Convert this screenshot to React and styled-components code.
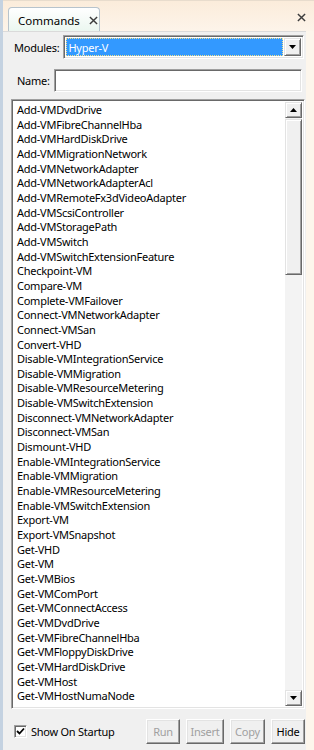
import React from "react";
import styled, { createGlobalStyle } from "styled-components";

const GlobalStyle = createGlobalStyle`
  body {
    margin: 0;
    font-family: "Noto Sans", "DejaVu Sans", sans-serif;
    font-size: 11px;
    letter-spacing: -0.25px;
    color: #000;
  }
`;

const commands = [
  "Add-VMDvdDrive",
  "Add-VMFibreChannelHba",
  "Add-VMHardDiskDrive",
  "Add-VMMigrationNetwork",
  "Add-VMNetworkAdapter",
  "Add-VMNetworkAdapterAcl",
  "Add-VMRemoteFx3dVideoAdapter",
  "Add-VMScsiController",
  "Add-VMStoragePath",
  "Add-VMSwitch",
  "Add-VMSwitchExtensionFeature",
  "Checkpoint-VM",
  "Compare-VM",
  "Complete-VMFailover",
  "Connect-VMNetworkAdapter",
  "Connect-VMSan",
  "Convert-VHD",
  "Disable-VMIntegrationService",
  "Disable-VMMigration",
  "Disable-VMResourceMetering",
  "Disable-VMSwitchExtension",
  "Disconnect-VMNetworkAdapter",
  "Disconnect-VMSan",
  "Dismount-VHD",
  "Enable-VMIntegrationService",
  "Enable-VMMigration",
  "Enable-VMResourceMetering",
  "Enable-VMSwitchExtension",
  "Export-VM",
  "Export-VMSnapshot",
  "Get-VHD",
  "Get-VM",
  "Get-VMBios",
  "Get-VMComPort",
  "Get-VMConnectAccess",
  "Get-VMDvdDrive",
  "Get-VMFibreChannelHba",
  "Get-VMFloppyDiskDrive",
  "Get-VMHardDiskDrive",
  "Get-VMHost",
  "Get-VMHostNumaNode",
  "Get-VMHostNumaNodeStatus",
];

//little glyphs
const CloseIcon = ({ size = 10 }) => (
  <svg width={size} height={size} viewBox="0 0 10 10">
    <path d="M1 1 L9 9 M9 1 L1 9" stroke="#3c3c3c" strokeWidth="1.6" />
  </svg>
);

const Arrow = ({ up }) => (
  <svg width="7" height="4" viewBox="0 0 7 4">
    <path d={up ? "M0 4 L7 4 L3.5 0 Z" : "M0 0 L7 0 L3.5 4 Z"} fill="#000" />
  </svg>
);

const App = () => {
  return (
    <>
      <GlobalStyle />
      <Window>
        <Header>
          <Tab>
            Commands
            <TabClose>
              <CloseIcon size={9} />
            </TabClose>
          </Tab>
          <PaneClose>
            <CloseIcon size={9} />
          </PaneClose>
        </Header>
        <Body>
          <Panel>
            <FieldRow $top={3} $left={11}>
              <Label>Modules:</Label>
              <Combo>
                <Selected>
                  <SelectedText>Hyper-V</SelectedText>
                </Selected>
                <RaisedButton $w={17}>
                  <Arrow />
                </RaisedButton>
              </Combo>
            </FieldRow>
            <FieldRow $top={10} $left={14}>
              <Label>Name:</Label>
              <TextInput />
            </FieldRow>
            <ListBox>
              <Items>
                {commands.map((c) => (
                  <Item key={c}>{c}</Item>
                ))}
              </Items>
              <Scrollbar>
                <RaisedButton $w={17} $h={16}>
                  <Arrow up />
                </RaisedButton>
                <Track>
                  <Thumb />
                </Track>
                <RaisedButton $w={17} $h={16}>
                  <Arrow />
                </RaisedButton>
              </Scrollbar>
            </ListBox>
            <Footer>
              <CheckLabel>
                <CheckBox>
                  <svg width="9" height="9" viewBox="0 0 9 9">
                    <path
                      d="M1 4 L3.5 6.5 L8 1.5"
                      stroke="#000"
                      strokeWidth="1.8"
                      fill="none"
                    />
                  </svg>
                </CheckBox>
                Show On Startup
              </CheckLabel>
              <Buttons>
                <PushButton $w={34} disabled>
                  Run
                </PushButton>
                <PushButton $w={38} disabled>
                  Insert
                </PushButton>
                <PushButton $w={35} disabled>
                  Copy
                </PushButton>
                <PushButton $w={34}>Hide</PushButton>
              </Buttons>
            </Footer>
          </Panel>
        </Body>
      </Window>
    </>
  );
};

export default App;

const Window = styled.div`
  width: 314px;
  height: 750px;
  display: flex;
  flex-direction: column;
  background: #fdf6ec;
  box-sizing: border-box;
  border-left: 3px solid #c4d2e1;
  overflow: hidden;
`;

const Header = styled.div`
  height: 31px;
  flex-shrink: 0;
  display: flex;
  align-items: flex-end;
  justify-content: space-between;
  padding-left: 5px;
  padding-right: 8px;
  background: linear-gradient(#fbecdb, #fdf4ea);
  border-top: 1px solid #e8dccd;
  box-sizing: border-box;
`;

const Tab = styled.div`
  height: 25px;
  width: 92px;
  box-sizing: border-box;
  display: flex;
  align-items: center;
  padding-left: 9px;
  gap: 9px;
  font-size: 11.5px;
  letter-spacing: 0;
  border: 1px solid #b7c3cc;
  border-bottom: none;
  border-radius: 4px 4px 0 0;
  background: linear-gradient(#ffffff, #eaf6ef);
  margin-bottom: -1px;
`;

const TabClose = styled.span`
  display: flex;
  margin-top: 1px;
`;

const PaneClose = styled.span`
  display: flex;
  align-self: center;
  margin-top: 2px;
`;

const Body = styled.div`
  flex: 1;
  display: flex;
  padding-right: 8px;
  min-height: 0;
`;

const Panel = styled.div`
  flex: 1;
  background: #f0f0f0;
  display: flex;
  flex-direction: column;
  border-top: 1px solid #dadada;
  min-height: 0;
`;

const FieldRow = styled.div`
  display: flex;
  align-items: center;
  gap: 4px;
  margin-top: ${(p) => p.$top}px;
  padding-left: ${(p) => p.$left}px;
  padding-right: 2px;
`;

const Label = styled.span`
  white-space: nowrap;
`;

const sunken = `
  border-style: solid;
  border-width: 1px;
  border-color: #a0a0a0 #ffffff #ffffff #a0a0a0;
  box-shadow: inset 1px 1px 0 #696969, inset -1px -1px 0 #e3e3e3;
`;

const Combo = styled.div`
  flex: 1;
  height: 24px;
  box-sizing: border-box;
  ${sunken}
  background: #fff;
  display: flex;
  align-items: stretch;
  padding: 2px;
  gap: 1px;
`;

const Selected = styled.div`
  flex: 1;
  background: #3399ff;
  outline: 1px dotted #f2e08a;
  outline-offset: -1px;
  display: flex;
  align-items: center;
  padding-left: 2px;
`;

const SelectedText = styled.span`
  color: #fff;
`;

const RaisedButton = styled.div`
  width: ${(p) => p.$w}px;
  height: ${(p) => (p.$h ? `${p.$h}px` : "auto")};
  flex-shrink: 0;
  box-sizing: border-box;
  background: #f0f0f0;
  border-style: solid;
  border-width: 1px;
  border-color: #e3e3e3 #696969 #696969 #e3e3e3;
  box-shadow: inset 1px 1px 0 #ffffff, inset -1px -1px 0 #a0a0a0;
  display: flex;
  align-items: center;
  justify-content: center;
`;

const TextInput = styled.div`
  flex: 1;
  height: 23px;
  box-sizing: border-box;
  ${sunken}
  background: #fff;
  margin-right: 2px;
`;

const ListBox = styled.div`
  margin: 7px 1px 0 8px;
  height: 610px;
  flex-shrink: 0;
  box-sizing: border-box;
  ${sunken}
  background: #fff;
  display: flex;
  padding: 2px;
`;

const Items = styled.div`
  flex: 1;
  overflow: hidden;
  padding-left: 3px;
  padding-top: 1px;
`;

const Item = styled.div`
  line-height: 14.66px;
  white-space: nowrap;
`;

const Scrollbar = styled.div`
  width: 17px;
  display: flex;
  flex-direction: column;
`;

const Track = styled.div`
  flex: 1;
  background: #f3f3f3;
  padding-top: 1px;
`;

const Thumb = styled.div`
  height: 156px;
  box-sizing: border-box;
  background: #f0f0f0;
  border-style: solid;
  border-width: 1px;
  border-color: #e3e3e3 #696969 #696969 #e3e3e3;
  box-shadow: inset 1px 1px 0 #ffffff, inset -1px -1px 0 #a0a0a0;
`;

const Footer = styled.div`
  display: flex;
  align-items: center;
  justify-content: space-between;
  margin-top: 10px;
  padding: 0 1px 0 11px;
`;

const CheckLabel = styled.label`
  display: flex;
  align-items: center;
  gap: 4px;
  white-space: nowrap;
`;

const CheckBox = styled.span`
  width: 13px;
  height: 13px;
  box-sizing: border-box;
  ${sunken}
  background: #fff;
  display: flex;
  align-items: center;
  justify-content: center;
`;

const Buttons = styled.div`
  display: flex;
  gap: 6px;
`;

const PushButton = styled.button`
  font-family: inherit;
  font-size: 11px;
  letter-spacing: -0.25px;
  height: 25px;
  width: ${(p) => p.$w}px;
  padding: 0;
  background: #f0f0f0;
  color: ${(p) => (p.disabled ? "#a0a0a0" : "#000")};
  border-style: solid;
  border-width: 1px;
  border-color: #ffffff #696969 #696969 #ffffff;
  box-shadow: inset -1px -1px 0 #a0a0a0, inset 1px 1px 0 #e3e3e3;
  border-radius: 0;
`;
